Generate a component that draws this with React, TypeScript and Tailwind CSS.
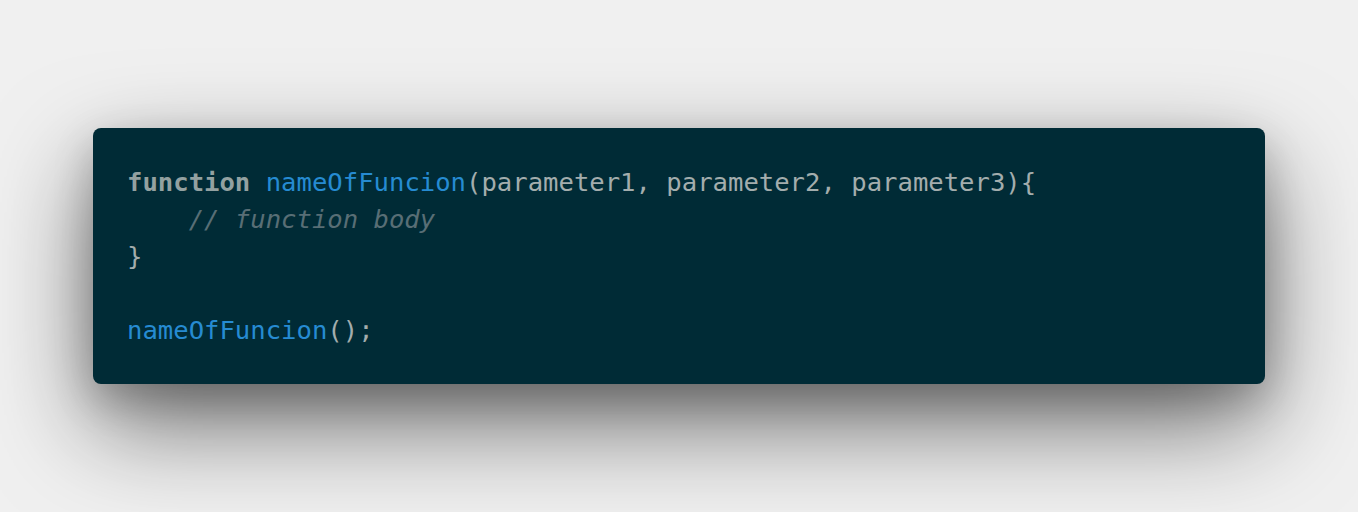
import React from 'react';

const mono = { fontFamily: '"DejaVu Sans Mono", "Liberation Mono", monospace' };

const Keyword: React.FC<{ children: React.ReactNode }> = ({ children }) => (
  <span className="font-bold text-[#93a1a1]">{children}</span>
);

const Fn: React.FC<{ children: React.ReactNode }> = ({ children }) => (
  <span className="text-[#268bd2]">{children}</span>
);

const Comment: React.FC<{ children: React.ReactNode }> = ({ children }) => (
  <span className="italic text-[#586e75]">{children}</span>
);

export default function App() {
  return (
    <div className="min-h-[512px] w-full bg-[#f0f0f0] px-[93px] pt-[128px] pb-[128px]">
      <pre
        className="rounded-lg bg-[#002b36] pl-[34px] pr-[36px] pt-[36px] pb-[35px] text-[25.6px] leading-[37px] text-[#a3adad] shadow-[0_40px_100px_rgba(0,0,0,0.55),0_15px_40px_rgba(0,0,0,0.2)]"
        style={mono}
      >
        <code className="block" style={mono}>
          <Keyword>function</Keyword> <Fn>nameOfFuncion</Fn>(parameter1, parameter2, parameter3){'{'}
          {'\n'}
          {'    '}<Comment>// function body</Comment>
          {'\n'}
          {'}'}
          {'\n'}
          {'\n'}
          <Fn>nameOfFuncion</Fn>();
        </code>
      </pre>
    </div>
  );
}
